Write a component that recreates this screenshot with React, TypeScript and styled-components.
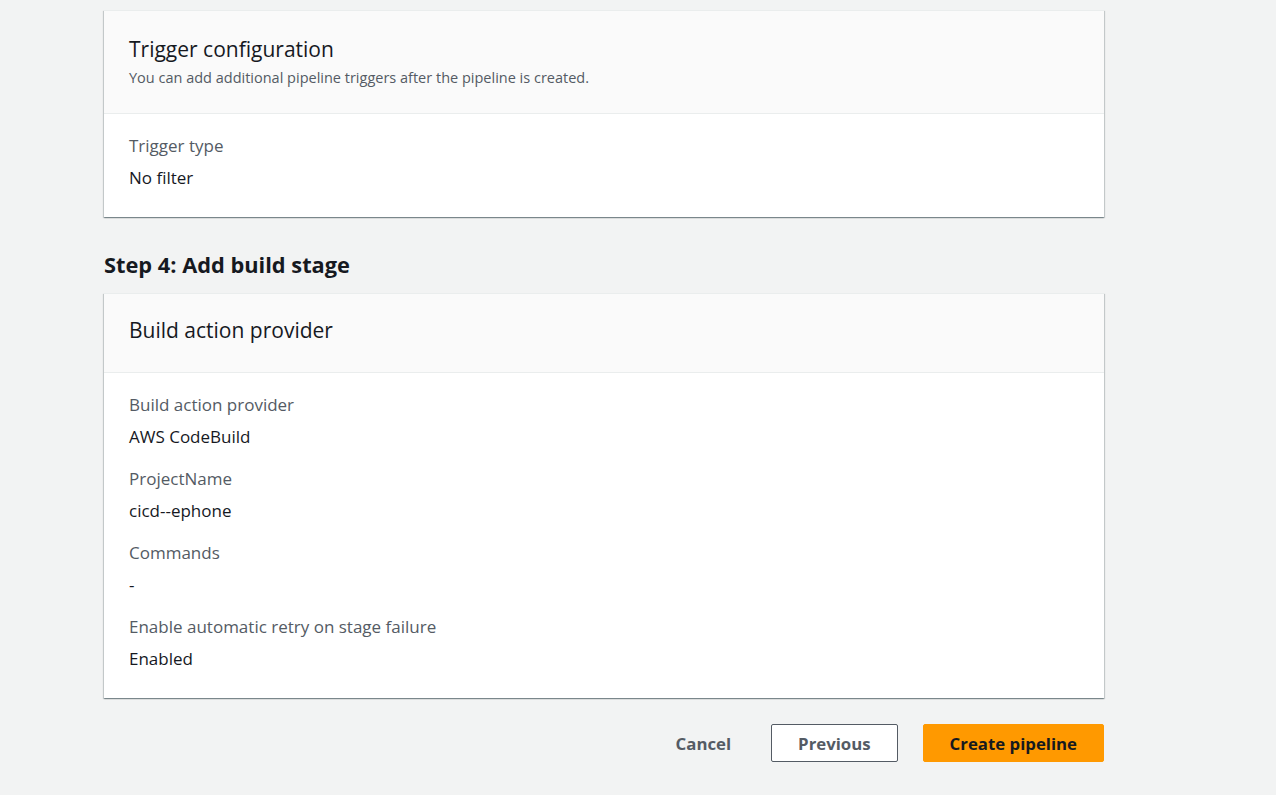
import React from "react";
import styled, { createGlobalStyle } from "styled-components";

const Global = createGlobalStyle`
  html, body { margin: 0; padding: 0; background: #f2f3f3; }
  body { font-family: "Open Sans", "Noto Sans", Arial, sans-serif; color: #16191f; }
`;

const Page = styled.div`
  padding: 10px 0 0 104px;
  width: 1000px;
  min-height: 785px;
`;

const Card = styled.section`
  background: #fff;
  border-top: 1px solid #eaeded;
  box-shadow: 0 1px 1px 0 rgba(0, 28, 36, 0.3), 1px 1px 1px 0 rgba(0, 28, 36, 0.15),
    -1px 1px 1px 0 rgba(0, 28, 36, 0.15);
`;

const CardHeader = styled.div<{ $pt: number; $pb: number }>`
  background: #fafafa;
  border-bottom: 1px solid #eaeded;
  padding: ${(p) => p.$pt}px 25px ${(p) => p.$pb}px;
`;

const CardTitle = styled.h2`
  margin: 0;
  font-size: 21px;
  line-height: 28px;
  font-weight: 400;
  color: #16191f;
`;

const CardDesc = styled.p`
  margin: 5px 0 0;
  font-size: 14.5px;
  line-height: 20px;
  color: #545b64;
`;

const CardBody = styled.div`
  padding: 21px 25px 28px;
  display: flex;
  flex-direction: column;
  gap: 20px;
`;

const Field = styled.div`
  display: flex;
  flex-direction: column;
  gap: 10px;
`;

const Label = styled.div`
  font-size: 17px;
  line-height: 22px;
  color: #545b64;
`;

const Value = styled.div`
  font-size: 17px;
  line-height: 22px;
  color: #16191f;
`;

const StepTitle = styled.h2`
  margin: 34px 0 14px 0;
  font-size: 21.8px;
  line-height: 28px;
  font-weight: 700;
  color: #16191f;
`;

const Actions = styled.div`
  display: flex;
  justify-content: flex-end;
  align-items: center;
  margin-top: 26px;
  gap: 25px;
`;

const Button = styled.button<{ $variant: "link" | "normal" | "primary" }>`
  font-family: inherit;
  font-size: 16.8px;
  font-weight: 700;
  height: 38px;
  box-sizing: border-box;
  border-radius: 2px;
  padding: 0 26px;
  cursor: pointer;
  border: 1px solid
    ${(p) => (p.$variant === "normal" ? "#545b64" : p.$variant === "primary" ? "#ff9900" : "transparent")};
  background: ${(p) => (p.$variant === "primary" ? "#ff9900" : p.$variant === "normal" ? "#fff" : "transparent")};
  color: ${(p) => (p.$variant === "primary" ? "#16191f" : "#545b64")};
  margin-right: ${(p) => (p.$variant === "link" ? "-12px" : "0")};
`;

const fields1 = [{ label: "Trigger type", value: "No filter" }];
const fields2 = [
  { label: "Build action provider", value: "AWS CodeBuild" },
  { label: "ProjectName", value: "cicd--ephone" },
  { label: "Commands", value: "-" },
  { label: "Enable automatic retry on stage failure", value: "Enabled" },
];

export default function App() {
  return (
    <>
      <Global />
      <Page>
        <Card>
          <CardHeader $pt={24} $pb={25}>
            <CardTitle>Trigger configuration</CardTitle>
            <CardDesc>You can add additional pipeline triggers after the pipeline is created.</CardDesc>
          </CardHeader>
          <CardBody>
            {fields1.map((f) => (
              <Field key={f.label}>
                <Label>{f.label}</Label>
                <Value>{f.value}</Value>
              </Field>
            ))}
          </CardBody>
        </Card>
        <StepTitle>Step 4: Add build stage</StepTitle>
        <Card>
          <CardHeader $pt={22} $pb={28}>
            <CardTitle>Build action provider</CardTitle>
          </CardHeader>
          <CardBody>
            {fields2.map((f) => (
              <Field key={f.label}>
                <Label>{f.label}</Label>
                <Value>{f.value}</Value>
              </Field>
            ))}
          </CardBody>
        </Card>
        <Actions>
          <Button $variant="link">Cancel</Button>
          <Button $variant="normal">Previous</Button>
          <Button $variant="primary">Create pipeline</Button>
        </Actions>
      </Page>
    </>
  );
}
